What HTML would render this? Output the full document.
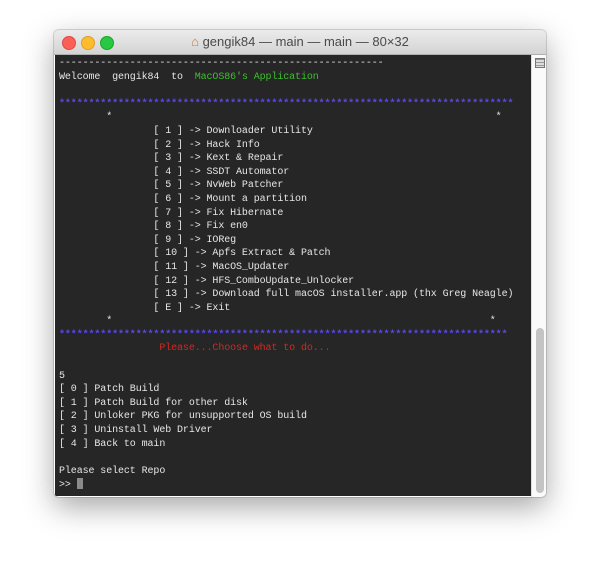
<!DOCTYPE html>
<html><head><style>
html,body{margin:0;padding:0;background:#fff;width:600px;height:574px;overflow:hidden;position:relative}
.win{position:absolute;left:54px;top:30px;width:492px;height:467px;border-radius:5px;overflow:hidden;box-shadow:0 10px 30px rgba(0,0,0,.35),0 0 0 1px rgba(0,0,0,.15)}
.title{position:absolute;left:0;top:0;width:492px;height:24px;background:linear-gradient(#ececec,#d4d4d4);border-bottom:1px solid #b0b0b0;font:13px "Liberation Sans",sans-serif;color:#4a4a4a;text-align:center;line-height:24px}
.dot{position:absolute;top:6px;width:12px;height:12px;border-radius:50%}
.term{position:absolute;left:1px;top:25px;width:476px;height:441px;background:#262626}
.sb{position:absolute;left:477px;top:25px;width:15px;height:442px;background:#fafafa;border-left:1px solid #ddd}
.thumb{position:absolute;left:4px;top:273px;width:8px;height:165px;border-radius:4px;background:#c4c4c4}
pre{position:absolute;left:4px;top:2px;margin:0;font:10px/13.6px "Liberation Mono",monospace;letter-spacing:-0.1px;color:#e6e6e6}
.b{color:#5a48f0;font-weight:bold}.g{color:#3cbf2e}.r{color:#d02a20}
.cur{display:inline-block;width:6px;height:11px;background:#8a8a8a;vertical-align:-2px}
</style></head><body>
<div class="win">
<div class="title">
<div class="dot" style="left:8px;background:#fc5f57;border:0.5px solid #de4a42"></div>
<div class="dot" style="left:27px;background:#fdbc2e;border:0.5px solid #de9f22"></div>
<div class="dot" style="left:46px;background:#28c840;border:0.5px solid #1ea32f"></div>
<span style="color:#c08040">&#8962;</span> gengik84 — main — main — 80×32</div>
<div class="term"><pre>-------------------------------------------------------
Welcome  gengik84  to  <span class="g">MacOS86's Application</span>

<span class="b">*****************************************************************************</span>
        *                                                                 *
                [ 1 ] -> Downloader Utility
                [ 2 ] -> Hack Info
                [ 3 ] -> Kext &amp; Repair
                [ 4 ] -> SSDT Automator
                [ 5 ] -> NvWeb Patcher
                [ 6 ] -> Mount a partition
                [ 7 ] -> Fix Hibernate
                [ 8 ] -> Fix en0
                [ 9 ] -> IOReg
                [ 10 ] -> Apfs Extract &amp; Patch
                [ 11 ] -> MacOS_Updater
                [ 12 ] -> HFS_ComboUpdate_Unlocker
                [ 13 ] -> Download full macOS installer.app (thx Greg Neagle)
                [ E ] -> Exit
        *                                                                *
<span class="b">****************************************************************************</span>
                 <span class="r">Please...Choose what to do...</span>

5
[ 0 ] Patch Build
[ 1 ] Patch Build for other disk
[ 2 ] Unloker PKG for unsupported OS build
[ 3 ] Uninstall Web Driver
[ 4 ] Back to main

Please select Repo
&gt;&gt; <span class="cur"></span></pre></div>
<div class="sb">
<div style="position:absolute;left:3px;top:3px;width:8px;height:8px;border:1px solid #777;background:repeating-linear-gradient(#999 0 1px,#ddd 1px 3px)"></div>
<div class="thumb"></div></div>
</div>
</body></html>
